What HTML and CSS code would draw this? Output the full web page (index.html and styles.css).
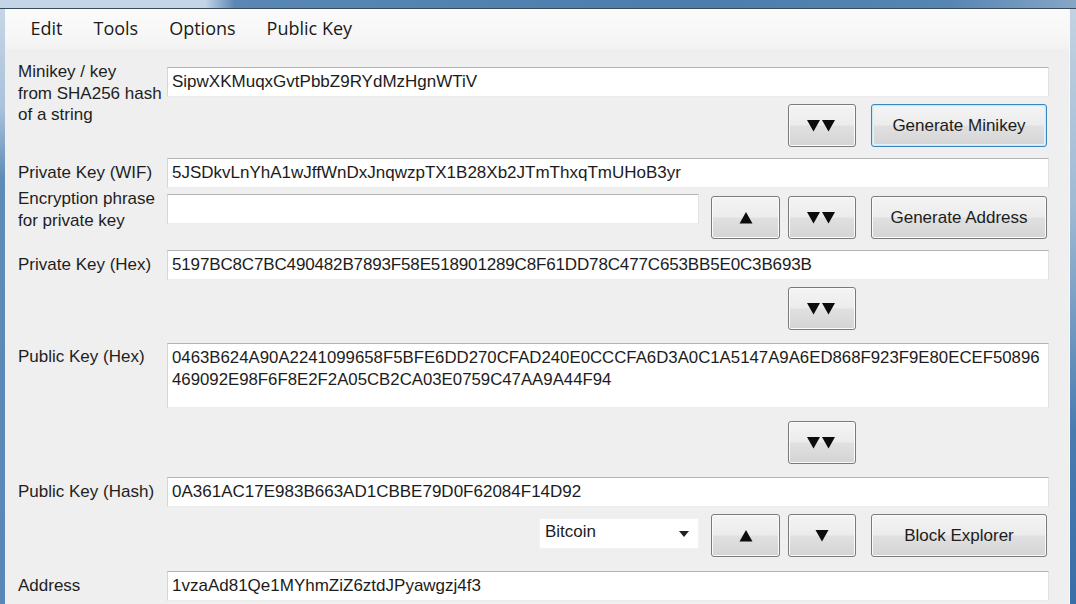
FILE: index.html
```html
<!DOCTYPE html>
<html>
<head>
<meta charset="utf-8">
<link rel="stylesheet" href="styles.css">
</head>
<body>
<div class="window">
  <div class="titlebar"></div>
  <div class="frame">
    <div class="edge-left"></div>
    <div class="client">
      <div class="menubar">
        <span class="menu-item">Edit</span>
        <span class="menu-item">Tools</span>
        <span class="menu-item">Options</span>
        <span class="menu-item">Public Key</span>
      </div>
      <div class="form">
        <div class="row row-mini">
          <div class="label label-multi label-mini">Minikey / key<br>from SHA256 hash<br>of a string</div>
          <div class="field">
            <div class="textbox">SipwXKMuqxGvtPbbZ9RYdMzHgnWTiV</div>
            <div class="btnrow btnrow-a">
              <button class="btn btn-arrow"><svg width="30" height="12" viewBox="0 0 30 12"><polygon points="0,0 13,0 6.5,11.5"/><polygon points="15,0 28,0 21.5,11.5"/></svg></button>
              <button class="btn btn-wide btn-focus">Generate Minikey</button>
            </div>
          </div>
        </div>

        <div class="row row-wif">
          <div class="label">Private Key (WIF)</div>
          <div class="field">
            <div class="textbox">5JSDkvLnYhA1wJffWnDxJnqwzpTX1B28Xb2JTmThxqTmUHoB3yr</div>
          </div>
        </div>

        <div class="row row-enc">
          <div class="label label-multi label-enc">Encryption phrase<br>for private key</div>
          <div class="field field-inline">
            <div class="textbox textbox-short"></div>
            <div class="btnrow btnrow-inline">
              <button class="btn btn-up"><svg width="16" height="12" viewBox="0 0 16 12"><polygon points="1.5,11.5 14.5,11.5 8,0"/></svg></button>
              <button class="btn btn-arrow"><svg width="30" height="12" viewBox="0 0 30 12"><polygon points="0,0 13,0 6.5,11.5"/><polygon points="15,0 28,0 21.5,11.5"/></svg></button>
              <button class="btn btn-wide">Generate Address</button>
            </div>
          </div>
        </div>

        <div class="row row-hex">
          <div class="label">Private Key (Hex)</div>
          <div class="field">
            <div class="textbox textbox-hex">5197BC8C7BC490482B7893F58E518901289C8F61DD78C477C653BB5E0C3B693B</div>
            <div class="btnrow btnrow-single">
              <button class="btn btn-arrow"><svg width="30" height="12" viewBox="0 0 30 12"><polygon points="0,0 13,0 6.5,11.5"/><polygon points="15,0 28,0 21.5,11.5"/></svg></button>
            </div>
          </div>
        </div>

        <div class="row row-pub">
          <div class="label label-pub">Public Key (Hex)</div>
          <div class="field">
            <div class="textarea"><div class="line">0463B624A90A2241099658F5BFE6DD270CFAD240E0CCCFA6D3A0C1A5147A9A6ED868F923F9E80ECEF50896</div><div class="line">469092E98F6F8E2F2A05CB2CA03E0759C47AA9A44F94</div></div>
            <div class="btnrow btnrow-single btnrow-pub">
              <button class="btn btn-arrow"><svg width="30" height="12" viewBox="0 0 30 12"><polygon points="0,0 13,0 6.5,11.5"/><polygon points="15,0 28,0 21.5,11.5"/></svg></button>
            </div>
          </div>
        </div>

        <div class="row row-hash">
          <div class="label">Public Key (Hash)</div>
          <div class="field">
            <div class="textbox">0A361AC17E983B663AD1CBBE79D0F62084F14D92</div>
            <div class="btnrow btnrow-net">
              <div class="select"><span>Bitcoin</span><svg width="10" height="6" viewBox="0 0 10 6"><polygon points="0,0 10,0 5,6"/></svg></div>
              <button class="btn btn-up"><svg width="16" height="12" viewBox="0 0 16 12"><polygon points="1.5,11.5 14.5,11.5 8,0"/></svg></button>
              <button class="btn btn-arrow"><svg width="16" height="12" viewBox="0 0 16 12"><polygon points="1.5,0 14.5,0 8,11.5"/></svg></button>
              <button class="btn btn-wide">Block Explorer</button>
            </div>
          </div>
        </div>

        <div class="row row-addr">
          <div class="label">Address</div>
          <div class="field">
            <div class="textbox">1vzaAd81Qe1MYhmZiZ6ztdJPyawgzj4f3</div>
          </div>
        </div>
      </div>
    </div>
    <div class="edge-right"></div>
  </div>
</div>
</body>
</html>
```

FILE: styles.css
```css
html, body {
  margin: 0;
  padding: 0;
  width: 1076px;
  height: 604px;
  overflow: hidden;
  background: #efefef;
}

.window {
  width: 1076px;
  height: 604px;
  display: flex;
  flex-direction: column;
  font-family: "Liberation Sans", Arial, sans-serif;
  font-size: 17px;
  color: #1c1c1c;
}

.titlebar {
  height: 8px;
  flex: none;
  background: linear-gradient(to right, #c3d5e6 0, #c3d5e6 205px, #5a87b5 235px, #4c7dad 700px, #5785b3 950px, #86a6c6 1076px);
  border-bottom: 1px solid #3a4b5c;
}

.frame {
  flex: 1;
  display: flex;
  min-height: 0;
}

.edge-left {
  width: 5px;
  flex: none;
  background: linear-gradient(to bottom, #c6d6e6 0, #a9c1da 100px, #5f8bb8 170px, #5a87b6 100%);
}

.edge-right {
  width: 6px;
  flex: none;
  background: linear-gradient(to bottom, #c2d2e2 0, #9fb9d4 200px, #4a7cb0 420px, #3a6ea6 100%);
}

.client {
  flex: 1;
  display: flex;
  flex-direction: column;
  background: #efefef;
  border-right: 1px solid #f8f8f8;
}

.menubar {
  height: 40px;
  flex: none;
  display: flex;
  align-items: center;
  padding-left: 10px;
  background: linear-gradient(to bottom, #fbfbfb 0, #f7f7f7 60%, #f2f2f2 100%);
  font-family: "Open Sans", "Noto Sans", sans-serif;
  font-size: 18px;
  color: #1a1a1a;
}

.menu-item {
  padding: 0 15.5px;
  line-height: 40px;
  margin-top: -2px;
}

.form {
  padding-left: 13px;
  padding-right: 20px;
  display: flex;
  flex-direction: column;
}

.row {
  display: flex;
  align-items: flex-start;
}

.label {
  width: 149px;
  flex: none;
  line-height: 30px;
  white-space: nowrap;
  color: #1e1e1e;
}

.label-multi {
  line-height: 21.5px;
}

.field {
  width: 882px;
  flex: none;
  display: flex;
  flex-direction: column;
}

.textbox {
  height: 30px;
  box-sizing: border-box;
  background: #ffffff;
  border: 1px solid;
  border-color: #b4b4b4 #e2e2e2 #ececec #d6d6d6;
  padding-left: 4px;
  line-height: 28px;
  white-space: nowrap;
  overflow: hidden;
  color: #1c1c1c;
}

.textbox-hex {
  letter-spacing: -0.15px;
}

.textarea {
  height: 65px;
  box-sizing: border-box;
  background: #ffffff;
  border: 1px solid;
  border-color: #b4b4b4 #e2e2e2 #ececec #d6d6d6;
  padding: 3px 0 0 4px;
  line-height: 22px;
  overflow: hidden;
  font-size: 16.8px;
}

.line {
  white-space: nowrap;
}

.btnrow {
  display: flex;
  justify-content: flex-end;
  align-items: flex-start;
  padding-right: 2px;
  gap: 8px;
}

.btn {
  height: 43px;
  box-sizing: border-box;
  border: 1px solid #7a7a7a;
  border-radius: 3px;
  background: linear-gradient(to bottom, #f4f4f4 0, #ececec 48%, #e0e0e0 52%, #d4d4d4 100%);
  box-shadow: inset 0 0 0 1px #fbfbfb;
  font-family: "Liberation Sans", Arial, sans-serif;
  font-size: 17px;
  color: #1c1c1c;
  padding: 0;
  display: flex;
  align-items: center;
  justify-content: center;
}

.btn svg {
  fill: #0c0c0c;
  display: block;
}

.btn-arrow {
  width: 68px;
}

.btn-up {
  width: 69px;
}

.btn-wide {
  width: 176px;
  margin-left: 7px;
}

.btn-focus {
  border-color: #3d84b8;
  box-shadow: inset 0 0 0 1px #c8e8f8, inset 0 0 0 2px #e4f3fb;
}

.label-mini {
  margin-top: 2px;
}

.row-mini {
  margin-top: 10px;
}

.row-mini .field {
  padding-top: 8px;
}

.btnrow-a {
  margin-top: 7px;
}

.row-wif {
  margin-top: 11px;
}

.row-enc {
  margin-top: 6px;
}

.label-enc {
  margin-top: -6px;
}

.field-inline {
  flex-direction: row;
  align-items: flex-start;
}

.textbox-short {
  width: 532px;
  flex: none;
}

.btnrow-inline {
  flex: 1;
  margin-top: 2px;
}

.row-hex {
  margin-top: 11px;
}

.btnrow-single {
  margin-top: 7px;
  padding-right: 193px;
}

.row-pub {
  margin-top: 13px;
}

.label-pub {
  line-height: 21px;
  margin-top: 3px;
}

.btnrow-pub {
  margin-top: 13px;
}

.row-hash {
  margin-top: 13px;
}

.btnrow-net {
  margin-top: 7px;
}

.select {
  width: 160px;
  height: 31px;
  box-sizing: border-box;
  margin-top: 4px;
  margin-right: 4px;
  background: #ffffff;
  border: 1px solid #f2f2f2;
  display: flex;
  align-items: center;
  justify-content: space-between;
  padding: 0 9px 0 5px;
  fill: #222;
}

.select span {
  margin-top: -3px;
}

.row-addr {
  margin-top: 14px;
}
```
